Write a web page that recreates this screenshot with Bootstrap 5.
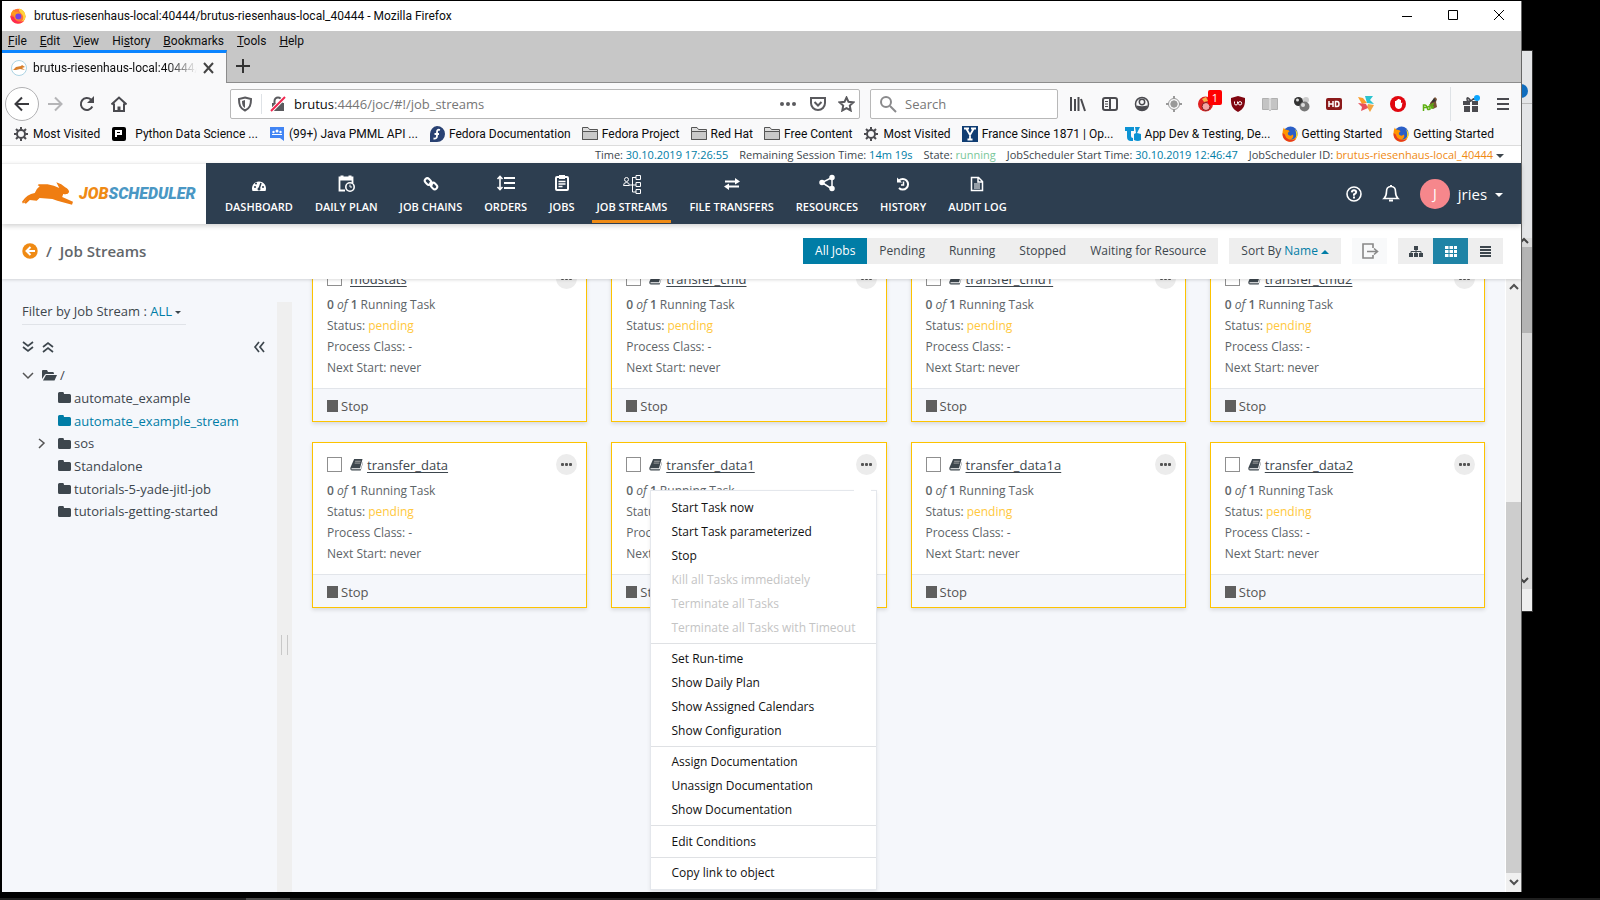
<!DOCTYPE html>
<html lang="en">
<head>
<meta charset="utf-8">
<meta name="viewport" content="width=device-width, initial-scale=1">
<title>Job Streams</title>
<link href="https://cdn.jsdelivr.net/npm/bootstrap@5.3.0/dist/css/bootstrap.min.css" rel="stylesheet">
<style>
:root{--teal:#007da6;--orange:#ef8a14;--navy:#2d3e50;--ink:#3d464d;--page:#f5f7fb}
body{margin:0;background:#000;font-family:"Open Sans","Liberation Sans",sans-serif;font-size:12px;line-height:18px;color:#3d464d;height:100vh;overflow:hidden}
button{font:inherit;color:inherit;background:none;border:0;padding:0}
a{color:inherit;text-decoration:none}
svg{display:block;flex:none}
.i16{width:16px;height:16px}
.desk{height:100vh;padding:1px 78px 8px 2px;position:relative}
.taskbar{position:absolute;left:0;right:0;bottom:0;height:2px;background:#1f1f1f}
.taskbar i{display:block;width:44px;height:2px;margin-left:246px;background:#4a4a4a}
.behind{position:absolute;right:67px;top:50px;width:60px;height:562px;background:#e4e5e7;border:1px solid #333;border-left:0}
.behind .strip{position:absolute;right:0;width:20px}
.win{position:relative;height:100%;background:var(--page);border-right:1px solid #666;color:#0c0c0d}
.titlebar,.menubar,.tabs,.marks{font-family:Roboto,"Open Sans",sans-serif}
.titlebar{height:30px;background:#fff;padding:0 13px 0 8px}
.menubar{height:19px;background:#c7c7c7;padding:0 6px;gap:13px}
.tabs{height:33px;background:#c7c7c7;border-bottom:1px solid #8c8c8c}
.tab{width:225px;height:33px;background:#f9f9fa;border-top:3px solid #0a84ff;border-right:1px solid #8c8c8c;padding:0 11px 0 9px;gap:6px}
.tab span{flex:1;overflow:hidden;white-space:nowrap;-webkit-mask:linear-gradient(90deg,#000 82%,transparent);mask:linear-gradient(90deg,#000 82%,transparent)}
.tools{height:40px;background:#f9f9fa;color:#4a4a4f;padding:2px 2px 0 3px}
.backbtn{width:34px;height:34px;border:1px solid #b1b1b3;border-radius:50%;background:#fff}
.ic{width:32px;height:32px;display:flex;align-items:center;justify-content:center;position:relative;flex:none}
.field{height:30px;border:1px solid #b8b8b8;border-radius:2px;background:#fff}
.field input{border:0;outline:0;background:none;font-size:13px;color:#0c0c0d;min-width:0;padding:0}
.field input::placeholder{color:#777}
.urltext{font-size:13px;flex:1;color:#767676}
.urltext b{font-weight:400;color:#0c0c0d}
.count{position:absolute;left:18px;top:2px;width:14px;height:15px;border-radius:2px;background:#f00;color:#fff;font-size:11px;line-height:15px;text-align:center}
.marks{height:23px;background:#f9f9fa;border-bottom:1px solid #dcdcdc;padding:0 27px 1px 11px;white-space:nowrap;justify-content:space-between}
.marks a{display:flex;align-items:center;gap:4px}
.status{height:17px;background:#fff;color:#3d464d;font-size:11px;line-height:17px;gap:11px;padding-right:17px}
.teal{color:var(--teal)}
.nav-top{height:61px;background:var(--navy);color:#fff;position:relative;z-index:5;box-shadow:0 2px 5px rgba(0,0,0,.18)}
.brandbox{width:204px;height:61px;background:#fff;box-shadow:inset 0 1px 0 #eee;padding-left:20px}
.brandword{font:italic 900 16px/20px Roboto,"Liberation Sans",sans-serif;color:#4a97c4;margin-left:6px}
.brandword span{color:var(--orange)}
.mains{padding-left:15px;gap:14px}
.mains a{height:61px;padding:10px 4px 0;font-size:11px;line-height:18px;font-weight:600;display:flex;flex-direction:column;align-items:center;gap:3px;white-space:nowrap;border-bottom:4px solid transparent}
.mains a svg{width:20px;height:22px}
.mains a.on{position:relative}
.mains a.on::after{content:"";position:absolute;left:0;right:0;bottom:-3px;height:3px;background:var(--orange)}
.user{padding-right:18px;font-size:15px}
.avatar{width:30px;height:30px;border-radius:50%;background:#f6878c;font-size:14px;line-height:30px;text-align:center}
.caret{width:0;height:0;border:4px solid transparent;border-top-color:currentColor;border-bottom:0;display:inline-block;vertical-align:middle}
.caret.up{border-top:0;border-bottom:4px solid currentColor}
.sub{height:55px;background:#fff;padding:0 18px 1px 20px;color:#3d464d;position:relative;z-index:4;box-shadow:0 1px 3px rgba(0,0,0,.15)}
.crumb{font-size:15px;font-weight:600;color:#62666a}
.seg{height:26px;background:#eee;font-size:12px;display:flex}
.seg+.seg{margin-left:11px}
.seg button{padding:0 12px;height:26px}
.seg button.on{background:var(--teal);color:#fff}
.seg .sq{width:35px;padding:0;display:flex;align-items:center;justify-content:center}
.seg .sq.on{background:#1f84a6}
.main{flex:1;min-height:0;background:var(--page);color:#3d464d;overflow:hidden}
.side{width:275px;padding:22px 12px 0 20px;font-size:13px}
.filter{border-bottom:1px solid #e0e3e8;height:24px;line-height:20px;width:164px;white-space:nowrap}
.treetools{height:39px;padding-top:5px}
.tree{list-style:none;margin:0;padding:0}
.tree li{display:flex;align-items:center;height:23px;gap:3px;white-space:nowrap}
.tree li:nth-child(3n+1){height:22px}
.tree li svg.fd{width:13px;height:13px}
.tree .kid{padding-left:36px}
.tree .kid.x{padding-left:16px}
.split{width:15px;margin-top:23px;background:#efefef;display:flex;gap:5px;padding-top:333px;justify-content:center}
.split i{width:1px;height:20px;background:#c8c8c8}
.area{flex:1;min-width:0;padding:0 20px}
.grid4{display:grid;grid-template-columns:repeat(4,minmax(0,1fr));column-gap:24px;row-gap:20px;margin-top:-23px}
.job{background:#fff;border:1px solid #fdc300;box-shadow:0 2px 4px rgba(0,0,0,.12);position:relative;color:#5d6468;height:166px;display:flex;flex-direction:column}
.jobhead{height:37px;padding:6px 9px 0 14px;font-size:13px}
.jobhead a{color:var(--ink);text-decoration:underline;text-underline-offset:2px}
.jobhead input{appearance:none;width:15px;height:15px;border:1px solid #8f8f8f;background:#fff;margin:0 8px 0 0}
.dots{width:21px;height:21px;border-radius:50%;background:#ececec;display:flex;align-items:center;justify-content:center;gap:1px}
.dots i{width:3px;height:3px;background:#555;border-radius:1px}
.lines{padding:0 14px;line-height:21px;flex:1}
.lines p{margin:0}
.lines em{font-style:italic}
.pend{color:#ffc83d}
.jobfoot{height:33px;border-top:1px solid #e2e5ea;background:var(--page);padding:1px 14px 0;font-size:13px;color:#555}
.jobfoot button{display:flex;align-items:center;gap:3px}
.sqr{width:11px;height:12px;background:#5f5f5f}
.ctx{position:absolute;top:47px;right:9px;left:auto;width:227px;background:#fff;border:1px solid #e4e7ec;border-radius:0;padding:5px 0 4px;box-shadow:0 2px 4px rgba(0,0,0,.08);font-size:12px;z-index:3;min-width:0}
.ctx::before{content:"";position:absolute;right:5px;top:-3px;width:17px;height:4px;background:#fff}
.ctx .dropdown-item{padding:0 21px;line-height:24px;height:24px;color:#111;font-size:12px}
.ctx .dropdown-item:disabled{color:#c4c4c4}
.ctx .dropdown-divider{margin:3px 0;border-top:1px solid #dfe1e4;opacity:1}
.ctx .dropdown-divider.wide{margin-bottom:4px}
.scroller{width:16px;background:#f0f0f0;border-left:1px solid #fff;display:flex;flex-direction:column;align-items:center;justify-content:space-between}
.scroller .thumb{width:15px;height:371px;background:#cdcdcd}
</style>
</head>
<body>
<svg width="0" height="0" class="position-absolute">
<symbol id="gear" viewBox="0 0 16 16"><g fill="none" stroke="#4a4a4f"><circle cx="8" cy="8" r="4" stroke-width="2"/><path stroke-width="2" d="M8 1v2.500M8 12.500V15M1 8h2.500M12.500 8H15M3 3l2 2M11 11l2 2M13 3l-2 2M5 11l-2 2"/></g></symbol>
<symbol id="folderline" viewBox="0 0 16 16"><path d="M.5 13.500v-12H6l1.500 2h8v10z" fill="#ddd" stroke="#555"/><path d="M.5 5.500h15v8H.5z" fill="#c9c9c9" stroke="#555"/></symbol>
<symbol id="fox" viewBox="0 0 16 16"><circle cx="8" cy="8.300" r="7.500" fill="#ff7139"/><path d="M9 .5c4 1 6.500 4 6.500 7.800 0 4-3.500 7.200-7 7.200 5-2 5.500-6 4-8.500C11 4.500 8.500 4 9 .5z" fill="#ffd43a"/><path d="M1 6C1.500 4 3 2.500 3.500 1.500L5 4c2-.5 4 0 5 1.500C12 8 11 12 8 12c-3 0-4-2-4-4z" fill="#ff9a1f"/><circle cx="8.300" cy="8.500" r="3" fill="#7542e5"/><path d="M.5 8c0 4 3 7.500 7.500 7.500 3 0 5-1 6-3-4 2.500-9 1-10-3.500z" fill="#ff2a4f"/></symbol>
<symbol id="foxold" viewBox="0 0 16 16"><circle cx="8.500" cy="7.500" r="7" fill="#2a5ec7"/><path d="M2 1.500c0 1 .8 1.800 1.800 2.300C5.500 3.500 7 4.500 7.500 5.500 6 6 5.500 7 6 8.500c1 1.500 3.500 1.500 5 0 1 3-1 4.500-3 5 4 .5 7-2.500 7.500-6.500C16 12 12.500 15.700 8 15.700 3.500 15.700.5 12 .5 8c0-3 .5-5 1.500-6.500z" fill="#ff9500"/><path d="M.7 7c-.7 5 3 8.700 7.300 8.700 3 0 5-1 6-3-4 2.500-10 1-11-4z" fill="#e63a1e"/><path d="M13 3c3 3 3.500 7 .5 10 1-3 1-6-.5-10z" fill="#ffe226"/></symbol>
<symbol id="fold" viewBox="0 0 13 13"><path d="M0 2.500Q0 1 1.500 1H5q1 0 1 2h5.500Q13 3 13 4.500v6q0 1.500-1.500 1.500h-10Q0 12 0 10.500z" fill="currentColor"/></symbol>
<symbol id="book" viewBox="0 0 14 14"><path d="M4.500 1h9l-2.700 10H2.500q-1.500 0-1 1.200h10L14 4v1l-2.500 8.500H2Q-.3 13 .6 10z" fill="#3d464d"/><path d="M5.500 3.500h6M5 5.500h6" stroke="#aaa"/></symbol>
<symbol id="hare" viewBox="0 0 52 24"><path d="M0 20q5-8 13-9 1-4 5-7l-2-1 1-1h9q7 1 12 4l-3-6 5 2 4 3q4 2 4 5-1 3-6 2l-1 3 11 5-1 3-15-4-5-2-13-1-3 3-7-1-4 4-2-1 3-5-4 6z" fill="#ef7d12"/></symbol>
</svg>
<div class="desk">
  <div class="behind"><div class="strip" style="top:52px;height:1px;background:#bbb"></div><div class="strip" style="top:187px;height:373px;background:#dadada"></div><div class="strip" style="top:196px;height:86px;background:#b4b4b4"></div><div class="strip" style="top:538px;height:22px;background:#efefef"></div>
    <svg class="position-absolute" style="right:0;top:30px" width="16" height="520" viewBox="0 0 16 520"><circle cx="5" cy="10" r="7" fill="#0f6cbd"/><path d="M4 162l4-4 4 4M4 497l4 4 4-4" fill="none" stroke="#444" stroke-width="2"/></svg></div>
  <div class="win d-flex flex-column">
    <div class="titlebar d-flex align-items-center"><svg class="i16 me-2"><use href="#fox"/></svg><span class="flex-grow-1">brutus-riesenhaus-local:40444/brutus-riesenhaus-local_40444 - Mozilla Firefox</span>
      <button aria-label="Minimize" class="ms-4"><svg width="18" height="16"><path d="M4 8.500h10" stroke="#000"/></svg></button>
      <button aria-label="Maximize" style="margin:0 28px"><svg width="18" height="16"><path d="M4.500 2.500h9v9h-9z" fill="none" stroke="#000"/></svg></button>
      <button aria-label="Close"><svg width="18" height="16"><path d="M4 2l10 10M14 2L4 12" stroke="#000"/></svg></button></div>
    <div class="menubar d-flex align-items-center"><a href="#"><u>F</u>ile</a><a href="#"><u>E</u>dit</a><a href="#"><u>V</u>iew</a><a href="#">Hi<u>s</u>tory</a><a href="#"><u>B</u>ookmarks</a><a href="#"><u>T</u>ools</a><a href="#"><u>H</u>elp</a></div>
    <div class="tabs d-flex"><div class="tab d-flex align-items-center"><svg class="i16" viewBox="0 0 16 16"><circle cx="8" cy="8" r="7.500" fill="#fff" stroke="#acd3e3"/><path d="M2 10l3-3 5-1 1-1 3 2-3 1 3 2-5-1-4 1z" fill="#d97f2b"/></svg><span>brutus-riesenhaus-local:40444/b</span><button aria-label="Close tab"><svg width="12" height="12"><path d="M1 1l9 10M10 1L1 11" stroke="#444" stroke-width="2"/></svg></button></div>
      <button aria-label="New tab" class="px-2"><svg width="16" height="16"><path d="M8 1v14M1 8h14" stroke="#333" stroke-width="2"/></svg></button></div>
    <div class="tools d-flex align-items-center">
      <button class="backbtn d-flex align-items-center justify-content-center" aria-label="Back"><svg class="i16" viewBox="0 0 16 16" fill="none" stroke="#3a3a3e" stroke-width="2"><path d="M15 8H1.500M8 1.500L1.500 8 8 14.500"/></svg></button>
      <button class="ic" aria-label="Forward"><svg class="i16" viewBox="0 0 16 16" fill="none" stroke="#b5b5b7" stroke-width="2"><path d="M1 8h13.500M8 1.500L14.500 8 8 14.500"/></svg></button>
      <button class="ic" aria-label="Reload"><svg class="i16" viewBox="0 0 16 16"><path d="M13.300 10.500A6 6 0 1 1 12 3.600" fill="none" stroke="#4a4a4f" stroke-width="2"/><path d="M15 0v7H8z" fill="#4a4a4f"/></svg></button>
      <button class="ic" aria-label="Home"><svg class="i16" viewBox="0 0 16 16" fill="none" stroke="#4a4a4f" stroke-width="2"><path d="M.5 8.500L8 1.500l7.500 7M3 7.500V15h10V7.500"/><path d="M8 15v-4.500" stroke-width="3"/></svg></button>
      <div class="field d-flex align-items-center flex-grow-1" style="margin-left:95px">
        <svg class="ms-2" style="margin-left:6px!important" width="16" height="16" viewBox="0 0 16 16"><path d="M8 1.500l6 1.500c0 6-1 9-6 11.500C3 12 2 9 2 3z" fill="none" stroke="#5a5a5e" stroke-width="2"/><path d="M8 4v8c-2-1-3-3-3-7z" fill="#5a5a5e"/></svg>
        <span class="border-start mx-2" style="height:20px"></span>
        <svg class="me-2" width="16" height="16" viewBox="0 0 16 16"><path d="M4.500 8V5a3.500 3.500 0 0 1 7 0v3" fill="none" stroke="#5a5a5e" stroke-width="2"/><path d="M2 7h12v8H2z" fill="#5a5a5e"/><path d="M1 15L15 1" stroke="#fff" stroke-width="4"/><path d="M1 15L15 1" stroke="#f0264f" stroke-width="2"/></svg>
        <span class="urltext"><b>brutus</b>:4446/joc/#!/job_streams</span>
        <button class="me-2 ms-1" aria-label="Page actions"><svg width="20" height="16"><g fill="#5a5a5e"><circle cx="4" cy="8" r="2"/><circle cx="10" cy="8" r="2"/><circle cx="16" cy="8" r="2"/></g></svg></button>
        <button class="ms-1" aria-label="Pocket"><svg class="i16" viewBox="0 0 16 16" fill="none" stroke="#5a5a5e" stroke-width="2"><path d="M1 2h14v5a7 7 0 0 1-14 0z"/><path d="M4.500 6L8 9.500 11.500 6"/></svg></button>
        <button class="ms-2 me-1 ps-1" aria-label="Bookmark"><svg width="17" height="16" viewBox="0 0 16 16"><path d="M8 1.500l2 4.300 4.800.6-3.500 3.200.9 4.900L8 12.200l-4.200 2.300.9-4.900L1.200 6.400 6 5.800z" fill="none" stroke="#5a5a5e" stroke-width="2"/></svg></button>
      </div>
      <label class="field d-flex align-items-center ps-2 me-1" style="width:188px;margin-left:10px"><svg class="me-2" width="18" height="18" viewBox="0 0 18 18" fill="none" stroke="#8a8a8c" stroke-width="2"><circle cx="7" cy="7" r="5"/><path d="M11 11l6 6"/></svg><input class="w-75" placeholder="Search" aria-label="Search"></label>
      <button class="ic" aria-label="Library"><svg class="i16" viewBox="0 0 16 16" stroke="#4a4a4f" stroke-width="2"><path d="M1 1v14M5 3v12M8.500 1v14M11 3l4 12"/></svg></button>
      <button class="ic" aria-label="Sidebars"><svg class="i16" viewBox="0 0 16 16" fill="none" stroke="#4a4a4f" stroke-width="2"><rect x="1" y="2" width="14" height="12" rx="2"/><path d="M8 2v12"/><path d="M3 5.500h3M3 8h3M3 10.500h3" stroke-width="1"/></svg></button>
      <button class="ic" aria-label="Account"><svg class="i16" viewBox="0 0 16 16"><circle cx="8" cy="8" r="6.500" fill="none" stroke="#4a4a4f" stroke-width="1.500"/><circle cx="8" cy="6" r="2.700" fill="none" stroke="#4a4a4f" stroke-width="1.500"/><path d="M2.500 9.500q5.500 1.500 11 0-1 5-5.500 5t-5.500-5z" fill="#4a4a4f"/></svg></button>
      <button class="ic" aria-label="Locate"><svg class="i16" viewBox="0 0 16 16" stroke="#999" fill="none"><circle cx="8" cy="8" r="5.500"/><circle cx="8" cy="8" r="3.200" fill="#999"/><path d="M8 0v3M8 13v3M0 8h3M13 8h3" stroke-width="2"/></svg></button>
      <button class="ic" aria-label="Cleaner"><svg class="i16" viewBox="0 0 16 16"><circle cx="7.500" cy="8" r="7.500" fill="#e02020"/><circle cx="8" cy="10.500" r="4" fill="#f5a5a5" stroke="#802020"/><path d="M4 3l4-2 2 4-4 1z" fill="#f7b24a"/></svg><span class="count">1</span></button>
      <button class="ic" aria-label="Shield"><svg class="i16" viewBox="0 0 16 16"><path d="M8 0l7 2c.3 7-1 11-7 14C2 13 .7 9 1 2z" fill="#800610"/><path d="M4.500 5.500v2q0 1.500 1.500 1.500t1.500-1.500v-2" fill="none" stroke="#fff"/><circle cx="10" cy="7.300" r="1.700" fill="none" stroke="#fff"/></svg></button>
      <button class="ic" aria-label="Reader"><svg class="i16" viewBox="0 0 16 16"><path d="M.5 2.500h6L8 3.500l1.500-1h6v11h-6l-1.500 1-1.500-1h-6z" fill="#c4c4c4" stroke="#b0b0b0"/><path d="M8 3v11" stroke="#f2f2f2"/></svg></button>
      <button class="ic" aria-label="Molecules"><svg class="i16" viewBox="0 0 16 16"><circle cx="12" cy="4" r="3" fill="#ccc"/><circle cx="4.500" cy="5.500" r="4.500" fill="#333"/><circle cx="3.500" cy="4" r="1.500" fill="#ddd"/><circle cx="10.500" cy="10.500" r="5" fill="#777"/><circle cx="9" cy="9" r="2" fill="#ddd"/></svg></button>
      <button class="ic" aria-label="HD video"><svg class="i16" viewBox="0 0 16 16"><rect y="2" width="16" height="12" rx="2" fill="#8b1a1a"/><path d="M3 5v6M7 5v6M3 8h4M9.500 5.500v5H11q2 0 2-2.500t-2-2.500z" fill="none" stroke="#fff" stroke-width="1.500"/></svg></button>
      <button class="ic" aria-label="Session"><svg class="i16" viewBox="0 0 16 16"><path d="M0 1l5 1 4 5-5 1z" fill="#fa9d28"/><path d="M7 0h8l-3 4 4 4-7-1z" fill="#2bc4cf"/><path d="M10 8l6 1-4 7-3-5z" fill="#f2a541"/><path d="M0 7l8 1 2 4-7 3 1-4z" fill="#e8505b"/></svg></button>
      <button class="ic" aria-label="Blocker"><svg class="i16" viewBox="0 0 16 16"><circle cx="8" cy="8" r="8" fill="#e1070f"/><path d="M5 5v5q1 3 4 3 3-.5 3-4l.5-2.500-1.500.5V4L9.500 3.500V3H8v.5L6.500 4v1z" fill="#fff"/></svg></button>
      <button class="ic" aria-label="PDF tool"><svg class="i16" viewBox="0 0 16 16"><path d="M8 7l5-6 2 2-1 3 1 5-4 2-3-3z" fill="#7a5236"/><path d="M12 2l2 3-5 2z" fill="#333"/><path d="M1.500 15V9H3q2 .3 1.500 2.500H2M8 8v5q-3 1.500-2.500-1T8 11M10 13V9q.2-1.500 2-1M9 11h3" fill="none" stroke="#5eb010" stroke-width="1.500"/></svg></button>
      <span class="border-start mx-1" style="height:34px"></span>
      <button class="ic" aria-label="What's new"><svg width="18" height="18" viewBox="0 0 18 18"><path d="M1 6h7v4H1zM10 6h6v4h-6zM2 11h6v6H2zM10 11h6v6h-6z" fill="#4a4a4f"/><path d="M9 6q-4-5-4-2t4 2q4-4 3-1" stroke="#4a4a4f" fill="none" stroke-width="1.500"/><circle cx="15" cy="3" r="3" fill="#0aa5ff"/></svg></button>
      <button class="ic" aria-label="Menu"><svg class="i16"><path d="M2 3h12M2 8h12M2 13h12" stroke="#4a4a4f" stroke-width="2"/></svg></button>
    </div>
    <div class="marks d-flex align-items-center">
      <a href="#"><svg class="i16"><use href="#gear"/></svg>Most Visited</a>
      <a href="#"><svg class="i16 me-1" viewBox="0 0 16 16"><rect x="1" y="1" width="14" height="14" rx="2"/><path d="M5 11V5h5v3H5" fill="none" stroke="#fff" stroke-width="2"/></svg>Python Data Science ...</a>
      <a href="#"><svg class="i16" viewBox="0 0 16 16"><path d="M1 1h14v14l-4-3H1z" fill="#4285f4"/><g fill="#fff"><circle cx="4.500" cy="6" r="1.200"/><circle cx="8" cy="5" r="1.500"/><circle cx="11.500" cy="6" r="1.200"/><path d="M3 9h10V8H3z"/></g></svg>(99+) Java PMML API ...</a>
      <a href="#"><svg class="i16" viewBox="0 0 16 16"><path d="M8 0a8 8 0 1 1 0 16H1V8a8 8 0 0 1 7-8z" fill="#294172"/><path d="M11 4q-3-1-3 2v4q0 3-3.500 2.500M5.500 8H10" fill="none" stroke="#fff" stroke-width="1.800"/></svg>Fedora Documentation</a>
      <a href="#"><svg class="i16"><use href="#folderline"/></svg>Fedora Project</a>
      <a href="#"><svg class="i16"><use href="#folderline"/></svg>Red Hat</a>
      <a href="#"><svg class="i16"><use href="#folderline"/></svg>Free Content</a>
      <a href="#"><svg class="i16"><use href="#gear"/></svg>Most Visited</a>
      <a href="#"><svg class="i16" viewBox="0 0 16 16"><path d="M0 0h16v16H0z" fill="#0f3d73"/><path d="M2 2.500h5M9 2.500h5M4.500 3L8 9l3.500-6M8 8v5M5.500 13.500h5" fill="none" stroke="#fff" stroke-width="1.800"/></svg>France Since 1871 | Op...</a>
      <a href="#"><svg class="i16" viewBox="0 0 16 16"><path d="M0 1h9v4H6v5q0 2 2 2v3H6q-4 0-4-4V5H0zM10 1h5l-3 6 4 1v6q-3 2-7 0V8l2-1z" fill="#0c93d4"/></svg>App Dev &amp; Testing, De...</a>
      <a href="#"><svg class="i16"><use href="#foxold"/></svg>Getting Started</a>
      <a href="#"><svg class="i16"><use href="#foxold"/></svg>Getting Started</a>
    </div>
    <div class="status d-flex justify-content-end"><span>Time: <span class="teal">30.10.2019 17:26:55</span></span><span>Remaining Session Time: <span class="teal">14m 19s</span></span><span>State: <span style="color:#7ac79a">running</span></span><span>JobScheduler Start Time: <span class="teal">30.10.2019 12:46:47</span></span><span>JobScheduler ID: <span style="color:#ef8a14">brutus-riesenhaus-local_40444</span> <i class="caret"></i></span></div>
    <header class="nav-top d-flex">
      <div class="brandbox d-flex align-items-center"><svg width="51" height="24"><use href="#hare"/></svg><div class="brandword"><span>JOB</span>SCHEDULER</div></div>
      <nav class="mains d-flex flex-grow-1">
        <a href="#"><svg viewBox="0 0 20 22"><path d="M3.500 18a7 7 0 1 1 13 0z" fill="#fff"/><path d="M10 16l2-6" stroke="#2d3e50" stroke-width="1.500"/><g fill="#2d3e50"><circle cx="6" cy="14" r="1"/><circle cx="7" cy="10.500" r="1"/><circle cx="14" cy="14" r="1"/><circle cx="10" cy="16" r="1.500"/></g></svg>DASHBOARD</a>
        <a href="#"><svg viewBox="0 0 20 22" fill="none" stroke="#fff"><path d="M9 17.500H3.500v-13h13V10" stroke-width="1.800"/><path d="M3 6h14M6 2.500v3M14 2.500v3" stroke-width="3"/><circle cx="14" cy="14" r="4.200" stroke-width="1.600"/><path d="M14 11.500V14h2"/></svg>DAILY PLAN</a>
        <a href="#"><svg viewBox="0 0 20 22" fill="none" stroke="#fff" stroke-width="2"><rect x="4.500" y="5" width="5" height="7" rx="2.500" transform="rotate(-45 7 8.500)"/><rect x="10.500" y="9.500" width="5" height="7" rx="2.500" transform="rotate(-45 13 13)"/><path d="M8.500 9.500l3 3"/></svg>JOB CHAINS</a>
        <a href="#"><svg viewBox="0 0 20 22" fill="none" stroke="#fff" stroke-width="2"><path d="M8 5h11M8 10h11M8 15h11"/><path d="M4 4v12M1.500 6L4 3.500 6.500 6M1.500 14L4 16.500 6.500 14" stroke-width="1.600"/></svg>ORDERS</a>
        <a href="#"><svg viewBox="0 0 20 22" fill="none" stroke="#fff"><rect x="4" y="4" width="12" height="13" rx="1" stroke-width="2"/><path d="M7 4h6" stroke-width="4"/><path d="M6.500 8.500h7M6.500 11h7M6.500 13.500h4" stroke-width="1.500"/></svg>JOBS</a>
        <a href="#" class="on"><svg viewBox="0 0 20 22" fill="none" stroke="#fff"><circle cx="4.500" cy="6.500" r="2"/><path d="M1.500 12.500q0-3 3-3t3 3zM8 12h6M10.500 4v15M10.500 4.500H14M10.500 19H14"/><path d="M14 2.500h4.500v4H14zM14 9.500h4.500v4H14zM14 16.500h4.500v4H14z"/></svg>JOB STREAMS</a>
        <a href="#"><svg viewBox="0 0 20 22" fill="none" stroke="#fff" stroke-width="1.800"><path d="M3 8.500h12M5 13.500h12"/><path d="M13 5l5 3.500-5 3zM7 10.500l-5 3 5 3.500z" fill="#fff" stroke="none"/></svg>FILE TRANSFERS</a>
        <a href="#"><svg viewBox="0 0 20 22" fill="#fff" stroke="#fff" stroke-width="1.500"><path d="M15 4.500L5 9.500l10 6.500z" fill="none"/><circle cx="15" cy="4.500" r="2"/><circle cx="5" cy="9.500" r="2"/><circle cx="15" cy="15.500" r="2"/></svg>RESOURCES</a>
        <a href="#"><svg viewBox="0 0 20 22" fill="none" stroke="#fff"><path d="M6 7.500a5.300 5.300 0 1 1 0 7.500" stroke-width="2"/><path d="M4 4.500v5h5z" fill="#fff" stroke="none"/><path d="M10.500 8.500V12H8" stroke-width="1.500"/></svg>HISTORY</a>
        <a href="#"><svg viewBox="0 0 20 22" fill="none" stroke="#fff" stroke-width="1.500"><path d="M4.500 4.500h7l4 4v9h-11zM11 4.500V9h4.500"/><path d="M7 11h6M7 13h6M7 15h6" stroke-width="1"/></svg>AUDIT LOG</a>
      </nav>
      <div class="user d-flex align-items-center"><button aria-label="Help"><svg class="i16" viewBox="0 0 16 16" fill="none" stroke="#fff" stroke-width="1.600"><circle cx="8" cy="8" r="7"/><path d="M5.800 6.300Q6 4.300 8 4.300t2.200 1.800Q10.200 7.500 8 8.500v1.200" stroke-width="2"/><path d="M7 11.500h2" stroke-width="1.800"/></svg></button>
        <button aria-label="Notifications" class="mx-3 px-1"><svg width="18" height="18" viewBox="0 0 18 18" fill="none" stroke="#fff" stroke-width="1.600"><path d="M9 1.500c-3.500 0-4.500 2-4.500 5 0 4-1 5.500-2.500 7h14c-1.500-1.500-2.500-3-2.500-7 0-3-1-5-4.500-5z"/><path d="M7 15.500h4M9 0v2" stroke-width="2"/></svg></button>
        <span class="avatar">J</span><button class="ms-2">jries <i class="caret ms-1"></i></button></div>
    </header>
    <div class="sub d-flex align-items-center">
      <a href="#" aria-label="Back to list"><svg class="i16" viewBox="0 0 16 16"><circle cx="8" cy="8" r="7.700" fill="#ef8a14"/><path d="M13 8H5M8.500 4L4.500 8l4 4" fill="none" stroke="#fff" stroke-width="2"/></svg></a>
      <span class="crumb ms-2">/</span><span class="crumb ms-2 flex-grow-1">Job Streams</span>
      <div class="seg"><button class="on">All Jobs</button><button>Pending</button><button>Running</button><button>Stopped</button><button>Waiting for Resource</button></div>
      <div class="seg"><button>Sort By <span class="teal">Name <i class="caret up"></i></span></button></div>
      <div class="seg bg-light"><button class="sq" aria-label="Export"><svg width="18" height="16" viewBox="0 0 18 16" fill="none" stroke="#888" stroke-width="1.600"><path d="M12 5V1H2v14h10v-3M6 8.500h10M13 5.500l3.500 3-3.500 3"/></svg></button></div>
      <div class="seg"><button class="sq" aria-label="Tree view"><svg width="14" height="13" viewBox="0 0 14 13"><path d="M5 1h4v4H5zM0 8h4v4H0zM5 8h4v4H5zM10 8h4v4h-4z" fill="#3d464d"/><path d="M7 4v5M2 9V6.500h10V9" fill="none" stroke="#3d464d"/></svg></button><button class="sq on" aria-label="Grid view"><svg width="14" height="12"><path d="M1 1h3.500v3H1zM5.500 1H9v3H5.500zM10 1h3v3h-3zM1 5h3.500v3H1zM5.500 5H9v3H5.500zM10 5h3v3h-3zM1 9h3.500v3H1zM5.500 9H9v3H5.500zM10 9h3v3h-3z" fill="#fff"/></svg></button><button class="sq" aria-label="List view"><svg width="12" height="12"><path d="M0 2h11M0 5h11M0 8h11M0 11h11" stroke="#3d464d" stroke-width="2"/></svg></button></div>
    </div>
    <div class="main d-flex">
      <aside class="side">
        <div class="filter">Filter by Job Stream : <span class="teal">ALL</span> <i class="caret" style="border-width:3px 3px 0"></i></div>
        <div class="treetools d-flex align-items-center">
          <button aria-label="Expand all" class="me-2"><svg width="12" height="12" fill="none" stroke="#3d464d" stroke-width="1.700"><path d="M1 1l5 4 5-4M1 6l5 4 5-4"/></svg></button>
          <button aria-label="Collapse all" class="me-auto"><svg width="12" height="12" fill="none" stroke="#3d464d" stroke-width="1.700"><path d="M1 6l5-4 5 4M1 11l5-4 5 4"/></svg></button>
          <button aria-label="Hide panel"><svg width="12" height="12" fill="none" stroke="#3d464d" stroke-width="1.700"><path d="M6 1L2 6l4 5M11 1L7 6l4 5"/></svg></button></div>
        <ul class="tree">
          <li><svg class="me-1" width="13" height="12" fill="none" stroke="#555" stroke-width="1.500"><path d="M1 4l5 5 5-5"/></svg><svg width="15" height="13" viewBox="0 0 15 13"><path d="M0 10V2q0-1 1-1h4l1 2h5q1 0 1 2H4q-1 0-2 2z" fill="#3d464d"/><path d="M4 6h11l-2.500 5.500H1z" fill="#3d464d"/></svg><a href="#">/</a></li>
          <li class="kid"><svg class="fd"><use href="#fold"/></svg><a href="#">automate_example</a></li>
          <li class="kid teal"><svg class="fd"><use href="#fold"/></svg><a href="#">automate_example_stream</a></li>
          <li class="kid x"><svg width="9" height="12" class="me-2" fill="none" stroke="#555" stroke-width="1.500"><path d="M1 2l5 4-5 5"/></svg><svg class="fd"><use href="#fold"/></svg><a href="#">sos</a></li>
          <li class="kid"><svg class="fd"><use href="#fold"/></svg><a href="#">Standalone</a></li>
          <li class="kid"><svg class="fd"><use href="#fold"/></svg><a href="#">tutorials-5-yade-jitl-job</a></li>
          <li class="kid"><svg class="fd"><use href="#fold"/></svg><a href="#">tutorials-getting-started</a></li>
        </ul>
      </aside>
      <div class="split"><i></i><i></i></div>
      <div class="area"><div class="grid4" id="jobs"></div></div>
      <div class="scroller"><svg width="15" height="16"><path d="M4 10l4-4 4 4" fill="none" stroke="#505050" stroke-width="2"/></svg><div class="flex-grow-1"></div><div class="thumb"></div><svg width="15" height="19"><path d="M4 7l4 4 4-4" fill="none" stroke="#505050" stroke-width="2"/></svg></div>
    </div>
  </div>
  <div class="taskbar"><i></i></div>
</div>
<template id="menu">
  <ul class="ctx dropdown-menu show">
    <li><button class="dropdown-item">Start Task now</button></li><li><button class="dropdown-item">Start Task parameterized</button></li><li><button class="dropdown-item">Stop</button></li><li><button class="dropdown-item" disabled>Kill all Tasks immediately</button></li><li><button class="dropdown-item" disabled>Terminate all Tasks</button></li><li><button class="dropdown-item" disabled>Terminate all Tasks with Timeout</button></li>
    <li><hr class="dropdown-divider"></li>
    <li><button class="dropdown-item">Set Run-time</button></li><li><button class="dropdown-item">Show Daily Plan</button></li><li><button class="dropdown-item">Show Assigned Calendars</button></li><li><button class="dropdown-item">Show Configuration</button></li>
    <li><hr class="dropdown-divider"></li>
    <li><button class="dropdown-item">Assign Documentation</button></li><li><button class="dropdown-item">Unassign Documentation</button></li><li><button class="dropdown-item">Show Documentation</button></li>
    <li><hr class="dropdown-divider wide"></li>
    <li><button class="dropdown-item">Edit Conditions</button></li>
    <li><hr class="dropdown-divider"></li>
    <li><button class="dropdown-item">Copy link to object</button></li>
  </ul>
</template>
<script src="https://cdn.jsdelivr.net/npm/bootstrap@5.3.0/dist/js/bootstrap.bundle.min.js"></script>
<script>
const names=['modstats','transfer_cmd','transfer_cmd1','transfer_cmd2','transfer_data','transfer_data1','transfer_data1a','transfer_data2'];
document.getElementById('jobs').innerHTML=names.map((n,i)=>`<article class="job">
<div class="jobhead d-flex align-items-center"><input type="checkbox" id="job${i}" aria-label="${n}">${i?'<svg width="13" height="13" class="me-1"><use href="#book"/></svg>':''}<a href="#" class="me-auto">${n}</a><button class="dots" aria-label="More actions"><i></i><i></i><i></i></button></div>
<div class="lines"><p><b class="fw-semibold">0</b> <em>of</em> <b class="fw-semibold">1</b> Running Task</p><p>Status: <span class="pend">pending</span></p><p>Process Class: -</p><p>Next Start: never</p></div>
<div class="jobfoot d-flex align-items-center"><button><i class="sqr"></i>Stop</button></div></article>`).join('');
document.querySelectorAll('.job')[5].append(document.getElementById('menu').content.cloneNode(true));
</script>
</body>
</html>
